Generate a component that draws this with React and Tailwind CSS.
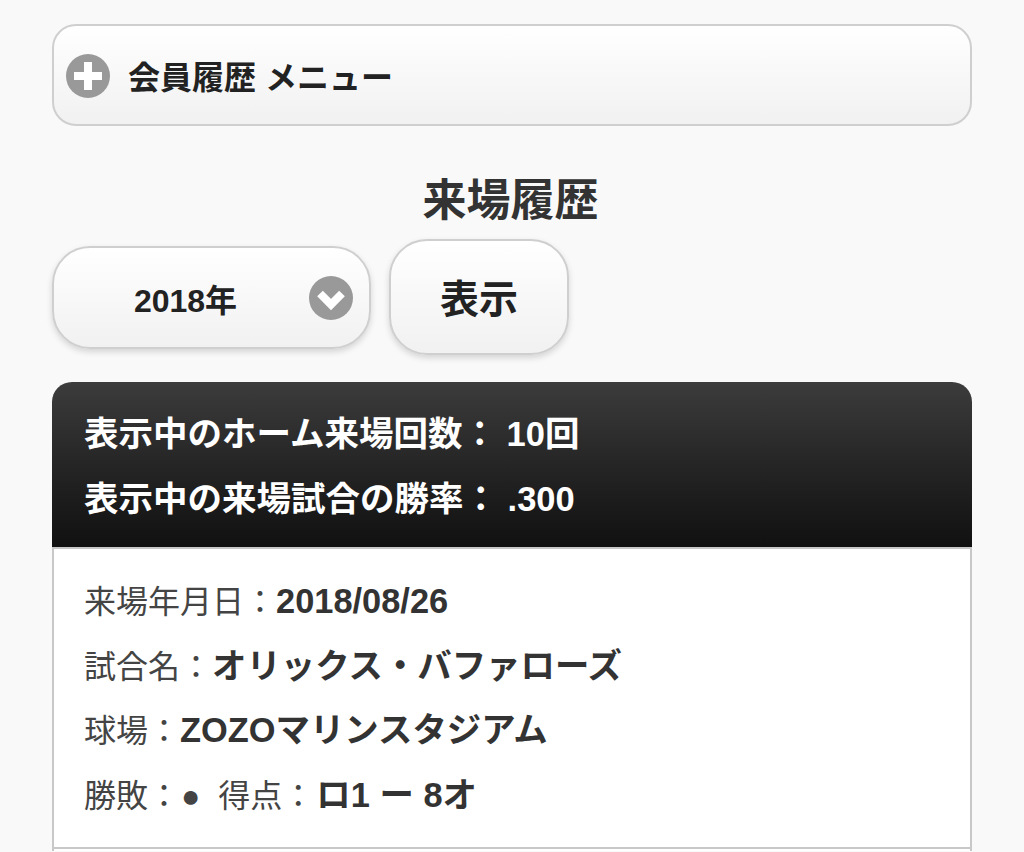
const font = "font-['Liberation_Sans','Noto_Sans_CJK_JP',sans-serif]";

function PlusIcon() {
	return (
		<svg width="44" height="44" viewBox="0 0 44 44" className="shrink-0 mt-[2px]">
			<circle cx="22" cy="22" r="22" fill="#999" />
			<path d="M22 8v28M8 22h28" stroke="#fff" strokeWidth="8" />
		</svg>
	);
}

function ChevronIcon() {
	return (
		<svg width="44" height="44" viewBox="0 0 44 44" className="shrink-0">
			<circle cx="22" cy="22" r="22" fill="#999" />
			<path d="M11 17.5L22 28.5l11-11" fill="none" stroke="#fff" strokeWidth="8" />
		</svg>
	);
}

export default function App() {
	return (
		<div className={`${font} bg-[#f9f9f9] h-[852px] overflow-hidden px-[52px] pt-[24px] text-[#222]`}>
			<div className="flex items-center h-[102px] rounded-[24px] border-2 border-[#cfcfcf] bg-gradient-to-b from-white to-[#f1f1f1] pl-[12px]">
				<PlusIcon />
				<span className="ml-[18px] pt-[5px] text-[32px] font-bold text-[#222]">会員履歴 メニュー</span>
			</div>

			<h2 className="mt-[45px] pr-[3px] text-center text-[44px] leading-[60px] font-bold text-[#333]">来場履歴</h2>

			<div className="flex items-center gap-[18px] mt-[8px]">
				<div className="relative flex items-center justify-center w-[319px] h-[103px] rounded-[38px] border-2 border-[#cfcfcf] bg-gradient-to-b from-white to-[#f1f1f1] shadow-[0_3px_6px_rgba(0,0,0,0.15)] pr-[52px] pt-[8px]">
					<span className="text-[32px] font-bold text-[#222]">2018年</span>
					<div className="absolute right-[16px] top-[28px]">
						<ChevronIcon />
					</div>
				</div>
				<div className="flex items-center justify-center w-[180px] h-[116px] rounded-[38px] border-2 border-[#cfcfcf] bg-gradient-to-b from-white to-[#f1f1f1] shadow-[0_3px_6px_rgba(0,0,0,0.15)] pt-[6px]">
					<span className="text-[39px] font-bold text-[#222]">表示</span>
				</div>
			</div>

			<div className="mt-[27px]">
				<div className="h-[165px] rounded-t-[20px] bg-gradient-to-b from-[#3c3c3c] to-[#111] px-[32px] pt-[20px] text-white text-[34.5px] font-bold leading-[65px] border-b border-[#111]">
					<div>表示中のホーム来場回数： 10回</div>
					<div>表示中の来場試合の勝率： .300</div>
				</div>
				<div className="bg-white border-x-2 border-t-2 border-[#c8c8c8] px-[30px] pt-[20px] h-[304px] text-[32px] text-[#444] leading-[64.5px]">
					<div className="h-[64.5px]">来場年月日：<b className="text-[34.4px] text-[#333]">2018/08/26</b></div>
					<div className="h-[64.5px]">試合名：<b className="text-[34.4px] text-[#333]">オリックス・バファローズ</b></div>
					<div className="h-[64.5px]">球場：<b className="text-[34.4px] text-[#333]">ZOZOマリンスタジアム</b></div>
					<div className="h-[64.5px]">勝敗：<span className="ml-[1px]">●</span><span className="ml-[18px]">得点：</span><b className="ml-[2px] text-[34.4px] text-[#333]">ロ1 ー 8オ</b></div>
					<div className="border-t-2 border-[#c8c8c8] -mx-[30px] mt-[20px]"></div>
				</div>
			</div>
		</div>
	);
}
